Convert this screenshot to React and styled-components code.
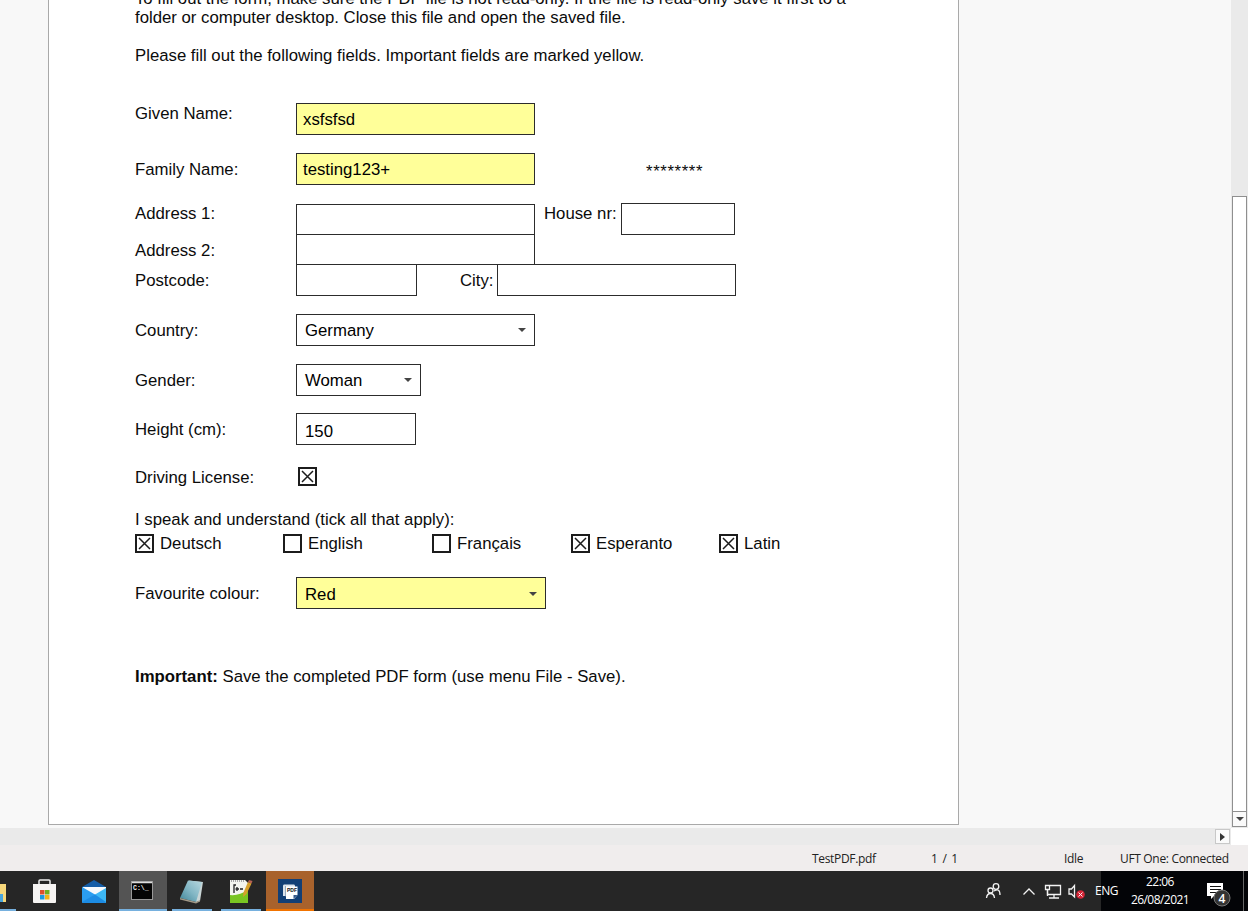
import React from "react";
import styled, { createGlobalStyle } from "styled-components";

const GlobalStyle = createGlobalStyle`
  * { box-sizing: border-box; }
  body { margin: 0; overflow: hidden; background: #f8f8f8; }
`;

const Screen = styled.div`
  width: 1248px;
  height: 911px;
  display: flex;
  flex-direction: column;
  overflow: hidden;
  color: #0b0b0b;
  font-family: "Liberation Sans", Arial, sans-serif;
`;

const Viewer = styled.main`
  height: 828px;
  display: flex;
  overflow: hidden;
  background: #f8f8f8;
`;

const Canvas = styled.div`
  flex: 1;
  padding-left: 48px;
`;

const Page = styled.form`
  width: 911px;
  height: 825px;
  padding-left: 86px;
  overflow: hidden;
  background: #fff;
  border: 1px solid #a9a9a9;
  border-top: 0;
  font-size: 16.76px;
  line-height: 19px;
  white-space: nowrap;
`;

const Intro = styled.header`
  height: 103px;
  margin-top: -11px;
  margin-bottom: 11px;
`;

const Paragraph = styled.p`
  margin: 0 0 19px;
`;

const Row = styled.div`
  display: flex;
  align-items: flex-start;
  height: ${(p) => p.$h}px;
`;

const Label = styled.label`
  flex: none;
  width: ${(p) => p.$w || 161}px;
  padding-top: ${(p) => p.$top}px;
  padding-left: ${(p) => p.$indent || 0}px;
`;

const Field = styled.div`
  flex: none;
  display: flex;
  justify-content: space-between;
  width: ${(p) => p.$w}px;
  height: ${(p) => p.$h || 32}px;
  margin-top: ${(p) => p.$mt || 0}px;
  padding: ${(p) => p.$pt || 6}px 8px 0 ${(p) => p.$pl || 8}px;
  background: ${(p) => (p.$required ? "#ffff99" : "#fff")};
  border: 1px solid #2c2c2c;
  color: #000;
`;

const Arrow = styled.span`
  width: 0;
  height: 0;
  margin-top: ${(p) => (p.$mt === undefined ? 7 : p.$mt)}px;
  border: 4px solid transparent;
  border-top-color: #444;
  border-bottom: 0;
`;

const Password = styled.span`
  padding: 9px 0 0 111px;
  letter-spacing: 0.62px;
`;

const Question = styled.div`
  height: 24px;
`;

const Options = styled.div`
  display: flex;
  height: 43px;
`;

const Option = styled.label`
  display: flex;
  align-items: flex-start;
  gap: 6px;
  width: ${(p) => p.$w}px;
`;

const Box = styled.span`
  display: flex;
  width: 19px;
  height: 19px;
  border: 2px solid #1c1c1c;
`;

const Note = styled.p`
  margin: 58px 0 0;
`;

const VScroll = styled.div`
  width: 17px;
  display: flex;
  flex-direction: column;
  padding: 196px 1px 0;
  background: #eaeaea;
`;

const VThumb = styled.div`
  height: 616px;
  background: #fff;
  border: 1px solid #8f8f8f;
`;

const ScrollButton = styled.div`
  display: flex;
  align-items: center;
  justify-content: center;
  width: 15px;
  height: 15px;
  border: 1px solid ${(p) => p.$border || "#8f8f8f"};
  border-top-width: ${(p) => (p.$joined ? 0 : 1)}px;
  background: #fafafa;
`;

const HScroll = styled.div`
  display: flex;
  justify-content: flex-end;
  height: 17px;
  padding: 1px 1px 0 0;
  margin-right: 17px;
  background: #eaeaea;
`;

const HScrollRow = styled.div`
  height: 17px;
  background: #fff;
`;

const StatusBar = styled.footer`
  display: flex;
  height: 26px;
  padding-left: 812px;
  background: #f0eded;
  color: #222;
  font: 12px/27px "Open Sans", "Noto Sans", sans-serif;
  white-space: nowrap;
`;

const Status = styled.span`
  width: ${(p) => p.$w}px;
  letter-spacing: ${(p) => p.$ls || -0.33}px;
`;

const Taskbar = styled.nav`
  display: flex;
  height: 40px;
  background: #262626;
  color: #fff;
  font-family: "Open Sans", "Noto Sans", sans-serif;
`;

const TaskButton = styled.div`
  display: flex;
  flex-direction: column;
  align-items: ${(p) => (p.$edge ? "flex-start" : "center")};
  width: ${(p) => p.$w || 49}px;
  padding-right: 1px;
  svg {
    flex: none;
    display: block;
    width: ${(p) => (p.$edge ? 20 : 48)}px;
    height: 38px;
    background: ${(p) => p.$bg || "transparent"};
  }
`;

const Underline = styled.i`
  width: ${(p) => p.$w}px;
  height: 2px;
  background: ${(p) => p.$color || "#76b0de"};
`;

const Tray = styled.div`
  display: flex;
  margin-left: auto;
`;

const TrayDark = styled.div`
  display: flex;
  width: 147px;
  background: #030407;
`;

const Language = styled.span`
  width: 29px;
  margin-left: -6px;
  font-size: 12px;
  line-height: 40px;
  letter-spacing: -0.5px;
`;

const Clock = styled.div`
  width: 72px;
  display: flex;
  flex-direction: column;
  align-items: center;
  padding-top: 2px;
  font-size: 12px;
  line-height: 18px;
  letter-spacing: -0.55px;
`;

function Check({ on }) {
  return (
    <Box>
      {on && (
        <svg width="15" height="15" viewBox="0 0 15 15">
          <path d="M2 2 L13 13 M13 2 L2 13" stroke="#1c1c1c" strokeWidth="1.5" />
        </svg>
      )}
    </Box>
  );
}

const languages = [
  ["Deutsch", true, 148],
  ["English", false, 149],
  ["Français", false, 139],
  ["Esperanto", true, 148],
  ["Latin", true, 70],
];

function TaskApps() {
  return (
    <>
      <TaskButton $w={21} $edge>
        <svg>
          <path d="M0 13H6V31H0Z" fill="#f7d77b" />
          <path d="M0 23H3V31H0Z" fill="#49a4dc" />
        </svg>
        <Underline $w={16} />
      </TaskButton>
      <TaskButton>
        <svg>
          <path d="M18 14V10Q18 9 19 9H28Q29 9 29 10V14" fill="none" stroke="#eee" strokeWidth="1.5" />
          <path d="M12 13H35V31Q35 32 34 32H13Q12 32 12 31Z" fill="#f6f4f3" />
          <path d="M19 19h4.500v4.500h-4.500z" fill="#dd4f2c" />
          <path d="M24 19h4.500v4.500h-4.500z" fill="#6fae20" />
          <path d="M19 24h4.500v4.500h-4.500z" fill="#1e9ade" />
          <path d="M24 24h4.500v4.500h-4.500z" fill="#f2b418" />
        </svg>
      </TaskButton>
      <TaskButton>
        <svg>
          <path d="M12 16L24 9L36 16V19H12Z" fill="#145da7" />
          <path d="M13 16H36V25H13Z" fill="#f5f9fc" />
          <path d="M12 16L25 23.500L36 31Q36 32 35 32H13Q12 32 12 31Z" fill="#2a9df0" />
          <path d="M36 17V31Q36 32 35 32H14L25 23.500Z" fill="#3db8f5" />
          <path d="M12 31L25 23.500L36 31Q36 32 35 32H13Z" fill="#1c8ce4" />
        </svg>
      </TaskButton>
      <TaskButton $bg="#545454">
        <svg>
          <rect x="12.500" y="10.500" width="21" height="18" fill="#050505" stroke="#999" />
          <path d="M13 11.500H33" stroke="#ddd" strokeWidth="1.500" />
          <text x="14" y="19" fontSize="6.500" fontWeight="bold" fill="#eee" fontFamily="Liberation Mono, monospace">C:\_</text>
        </svg>
        <Underline $w={48} />
      </TaskButton>
      <TaskButton>
        <svg>
          <defs>
            <linearGradient id="note" x1="0" y1="1" x2="1" y2="0">
              <stop offset="0" stopColor="#3f8497" />
              <stop offset="0.500" stopColor="#83b7c5" />
              <stop offset="1" stopColor="#b9d8df" />
            </linearGradient>
          </defs>
          <path d="M21 9.500L35 11L32 30L28 31Z" fill="#c9d5d6" />
          <path d="M20 9.500L34 11L28 31L12 27Z" fill="url(#note)" />
          <path d="M12 27L28 31L32 29V30.500L28 32.500L12 28.500Z" fill="#a39a88" />
        </svg>
        <Underline $w={40} />
      </TaskButton>
      <TaskButton>
        <svg>
          <path d="M13 9H28L31 12V32H13Z" fill="#f4f5ef" />
          <path d="M13 24Q22 25 31 19V32H13Z" fill="#79c522" />
          <path d="M14 10H27" stroke="#aaa" strokeDasharray="1 1" strokeWidth="2" />
          <path d="M19 14H17V22M20 16V20M18.500 18H22M23 18H26" stroke="#222" strokeWidth="1.300" fill="none" />
          <path d="M31 11L34.500 12.500L29.500 23L26 26L26.500 21.500Z" fill="#d6a02c" />
          <path d="M31 11L32 9L35.500 10L34.500 12.500Z" fill="#b86254" />
        </svg>
        <Underline $w={40} />
      </TaskButton>
      <TaskButton $bg="#a8622c">
        <svg>
          <rect x="12" y="8" width="24" height="24" fill="#123f75" />
          <path d="M18 13.500H28Q29 13.500 29 15V25H17V15Q17 13.500 18 13.500Z" fill="#dce3ea" />
          <path d="M20 15.500H31.500V24L28 28H20Z" fill="#fff" />
          <path d="M19.500 15V25.500" stroke="#7890ac" strokeWidth="0.700" />
          <path d="M27.500 28V24H31.500Z" fill="#33598a" />
          <text x="21" y="21" fontSize="5" fontWeight="bold" fill="#111" fontFamily="Liberation Sans, sans-serif">PDF</text>
        </svg>
        <Underline $w={48} $color="#f17300" />
      </TaskButton>
    </>
  );
}

export default function App() {
  return (
    <Screen>
      <GlobalStyle />
      <Viewer>
        <Canvas>
          <Page>
            <Intro>
              <Paragraph>
                To fill out the form, make sure the PDF file is not read-only. If the file is read-only save it first to a
                <br />
                folder or computer desktop. Close this file and open the saved file.
              </Paragraph>
              <Paragraph>Please fill out the following fields. Important fields are marked yellow.</Paragraph>
            </Intro>
            <Row $h={50}>
              <Label $top={1}>Given Name:</Label>
              <Field $w={239} $pl={6} $required>xsfsfsd</Field>
            </Row>
            <Row $h={51}>
              <Label $top={7}>Family Name:</Label>
              <Field $w={239} $pl={6} $required>testing123+</Field>
              <Password>********</Password>
            </Row>
            <Row $h={30}>
              <Label $top={0}>Address 1:</Label>
              <Field $w={239} $h={31} />
              <Label $w={86} $indent={9}>House nr:</Label>
              <Field $w={114} $mt={-1} />
            </Row>
            <Row $h={30}>
              <Label $top={7}>Address 2:</Label>
              <Field $w={239} $h={31} />
            </Row>
            <Row $h={50}>
              <Label $top={7}>Postcode:</Label>
              <Field $w={121} />
              <Label $w={80} $indent={43} $top={7}>City:</Label>
              <Field $w={239} />
            </Row>
            <Row $h={50}>
              <Label $top={7}>Country:</Label>
              <Field $w={239}>Germany<Arrow /></Field>
            </Row>
            <Row $h={49}>
              <Label $top={7}>Gender:</Label>
              <Field $w={125}>Woman<Arrow /></Field>
            </Row>
            <Row $h={54}>
              <Label $top={7}>Height (cm):</Label>
              <Field $w={120} $pt={8}>150</Field>
            </Row>
            <Row $h={43}>
              <Label $top={1} $w={163}>Driving License:</Label>
              <Check on />
            </Row>
            <Question>I speak and understand (tick all that apply):</Question>
            <Options>
              {languages.map(([name, on, w]) => (
                <Option key={name} $w={w}>
                  <Check on={on} />
                  {name}
                </Option>
              ))}
            </Options>
            <Row $h={32}>
              <Label $top={7}>Favourite colour:</Label>
              <Field $w={250} $pt={7} $required>Red<Arrow /></Field>
            </Row>
            <Note><b>Important:</b> Save the completed PDF form (use menu File - Save).</Note>
          </Page>
        </Canvas>
        <VScroll>
          <VThumb />
          <ScrollButton $joined>
            <Arrow $mt={0} />
          </ScrollButton>
        </VScroll>
      </Viewer>
      <HScrollRow>
        <HScroll>
          <ScrollButton $border="#c8c8c8">
            <svg width="5" height="8"><path d="M0 0L5 4L0 8Z" fill="#333" /></svg>
          </ScrollButton>
        </HScroll>
      </HScrollRow>
      <StatusBar>
        <Status $w={119}>TestPDF.pdf</Status>
        <Status $w={133} $ls={0.7}>1 / 1</Status>
        <Status $w={56}>Idle</Status>
        <Status>UFT One: Connected</Status>
      </StatusBar>
      <Taskbar>
        <TaskApps />
        <Tray>
          <svg width="122" height="40" fill="none" stroke="#f2f2f2" strokeWidth="1.300">
            <circle cx="17" cy="15.500" r="2.800" />
            <path d="M15 20Q21 16.500 21 24" />
            <circle cx="11.500" cy="19.500" r="2.500" />
            <path d="M7.500 27Q8 22.500 11.500 22.500Q15 22.500 15.500 27" />
            <path d="M44.500 23.500L50 18L55.500 23.500" />
            <path d="M71 14.500H81.500V23.500H68.500V19M75 24V27M70 27H80" />
            <path d="M66.500 14.500H70.500V18.500H66.500ZM68.500 18.500V25" />
            <path d="M90 18H92.500L95.500 14.500V26L92.500 23H90Z" />
            <circle cx="101.500" cy="23.500" r="4.300" fill="#d52536" stroke="none" />
            <path d="M99.500 21.500L103.500 25.500M103.500 21.500L99.500 25.500" strokeWidth="1" />
          </svg>
          <TrayDark>
            <Language>ENG</Language>
            <Clock><span>22:06</span><span>26/08/2021</span></Clock>
            <svg width="52" height="40">
              <path d="M11 12H27V25H18L15 28V25H11Z" fill="#fff" />
              <path d="M14 15.500H25M14 18.500H25M14 21.500H22" stroke="#111" />
              <circle cx="26" cy="27" r="8" fill="#333" stroke="#777" />
              <text x="26" y="31.500" textAnchor="middle" fontSize="12" fontWeight="600" fill="#fff" fontFamily="Open Sans, sans-serif">4</text>
              <path d="M47.500 0V40" stroke="#666" />
            </svg>
          </TrayDark>
        </Tray>
      </Taskbar>
    </Screen>
  );
}
